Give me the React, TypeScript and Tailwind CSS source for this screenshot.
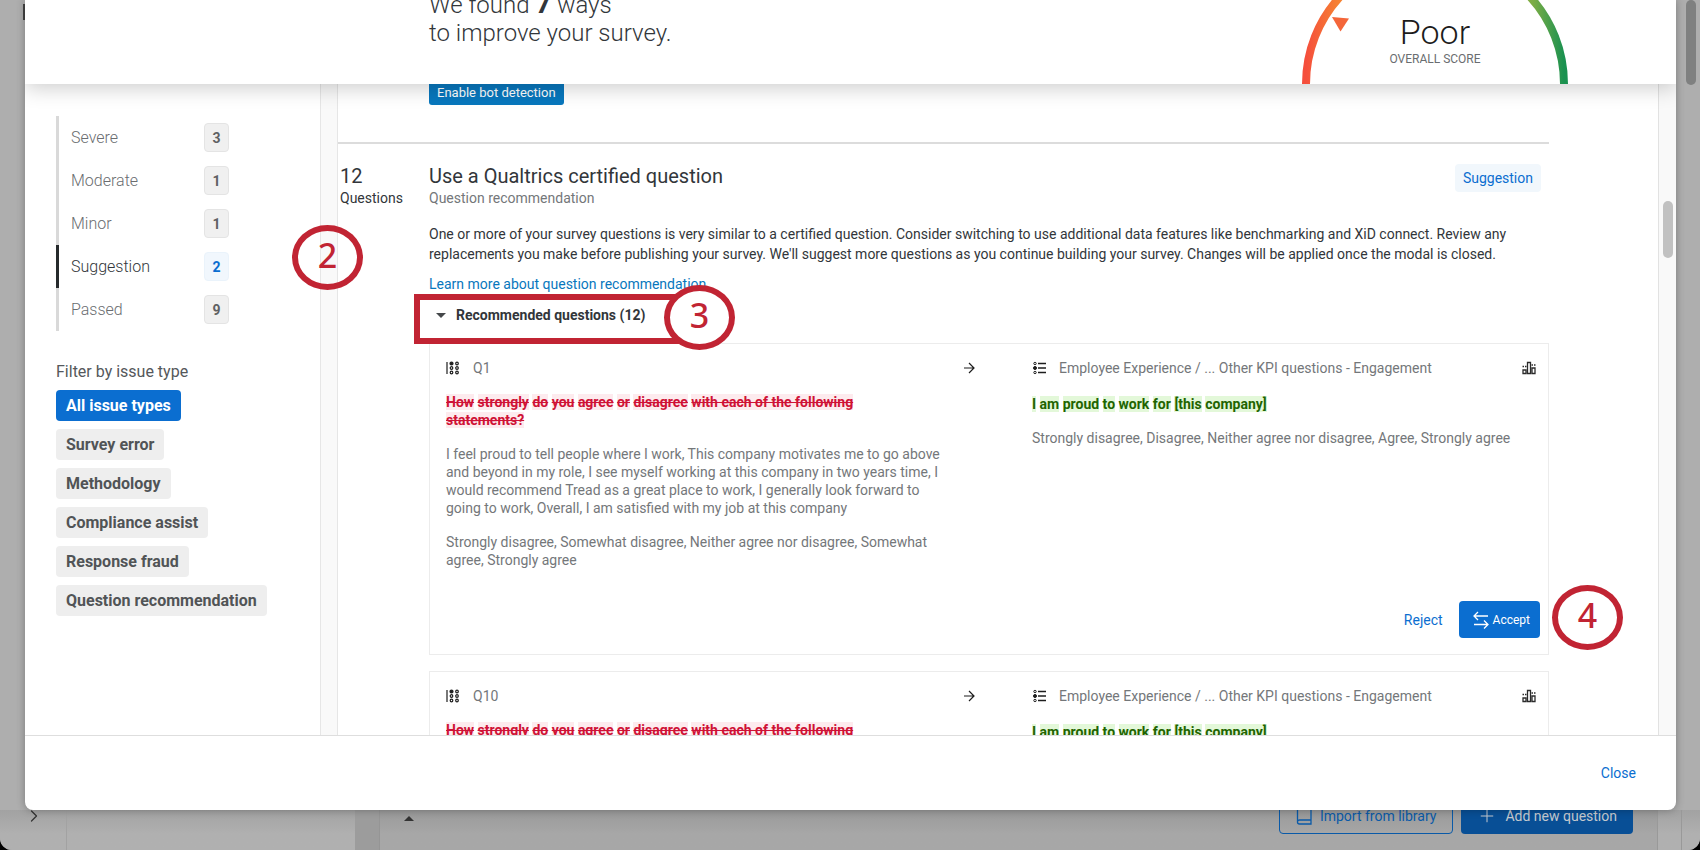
import React from 'react';
import { ChevronRight, Plus } from 'lucide-react';

const SEVERITIES = [
    { label: 'Severe', count: 3 },
    { label: 'Moderate', count: 1 },
    { label: 'Minor', count: 1 },
    { label: 'Suggestion', count: 2 },
    { label: 'Passed', count: 9 },
];

const ISSUE_TYPES = [
    'All issue types',
    'Survey error',
    'Methodology',
    'Compliance assist',
    'Response fraud',
    'Question recommendation',
];

const REMOVED = ['How', 'strongly', 'do', 'you', 'agree', 'or', 'disagree', 'with each of the following', 'statements?'];
const ADDED = ['I', 'am', 'proud', 'to', 'work', 'for', '[this', 'company]'];

export default function App() {
    return (
        <div className="relative h-screen overflow-hidden bg-black font-['Roboto','Liberation_Sans',sans-serif] text-[#32363a]">
            <EditorBackdrop />

            <main className="absolute inset-x-0 top-0 bottom-10 mr-6 ml-[25px] flex flex-col overflow-hidden rounded-b-lg bg-white shadow-[0_0_8px_rgba(0,0,0,0.3)]">
                <ModalHeader />

                <div className="flex min-h-0 flex-1">
                    <Sidebar />
                    <div className="w-[18px] shrink-0 border-x border-[#e6e6e6] bg-[#f9f9f9]" />
                    <Recommendations />
                    <div className="w-[18px] shrink-0 border-l border-[#e2e2e2] bg-[#f9f9f9] px-1 pt-[117px]">
                        <div className="h-[57px] w-[10px] rounded-full bg-[#c1c1c1]" />
                    </div>
                </div>

                <footer className="flex h-[75px] shrink-0 items-center justify-end border-t border-[#dedede] px-10">
                    <button type="button" className="text-sm text-[#0b6ed0]">Close</button>
                </footer>
            </main>

            <Callout number={2} className="top-[225px] left-[292px]" />
            <div className="absolute top-[294px] left-[414px] h-[50px] w-[284px] border-6 border-[#c12433]" />
            <Callout number={3} className="top-[285px] left-[664px] bg-white" />
            <Callout number={4} className="top-[585px] right-[77px]" />
        </div>
    );
}

const EditorBackdrop = () => (
    <div className="flex h-full flex-col justify-end rounded-b-xl bg-[#aeaeae]">
        <div className="absolute top-1 left-[23px] h-4 w-1 bg-[#444]" />
        <div className="absolute top-0 right-1 h-[85px] w-[10px] rounded-full bg-[#7f8080]" />
        <div className="flex h-10 rounded-b-xl bg-linear-to-b from-[#a2a2a2] to-[#b0b0b0] to-60%">
            <div className="flex w-[67px] justify-end border-r border-[#a2a2a2] pr-[22px]">
                <ChevronRight className="-mt-1 size-5 text-[#333]" strokeWidth={1.5} />
            </div>
            <div className="w-[288px]" />
            <div className="w-[25px] border-r border-[#959595] bg-[#9c9c9c]" />
            <div className="flex flex-1 items-start justify-between border-r border-[#999] bg-black/5 pr-6 pl-6">
                <svg width="10" height="5" viewBox="0 0 10 5" className="mt-[6px]">
                    <path d="M0 5 5 0l5 5z" fill="#333" />
                </svg>
                <div className="-mt-3 flex gap-2 text-sm">
                    <button type="button" className="flex h-9 items-center gap-2 rounded border border-[#0a5aa8] px-4 text-[#0a5aa8]">
                        <BookIcon />
                        Import from library
                    </button>
                    <button type="button" className="flex h-9 items-center gap-2 rounded bg-[#084f96] px-4 text-[#c4c9ce]">
                        <Plus className="size-5" strokeWidth={1.2} />
                        Add new question
                    </button>
                </div>
            </div>
            <div className="w-6 border-r border-[#999]" />
            <div className="w-[18px]" />
        </div>
    </div>
);

const ModalHeader = () => (
    <header className="relative z-10 flex h-[84px] shrink-0 items-end bg-white pr-[108px] pl-[404px] shadow-[0_4px_20px_rgba(0,0,0,0.2)]">
        <h1 className="flex-1 pb-[37px] text-2xl leading-7 font-light">
            We found <strong className="text-[28px] font-bold">7</strong> ways
            <br />
            to improve your survey.
        </h1>
        <ScoreGauge />
    </header>
);

const ScoreGauge = () => (
    <div className="grid h-[84px] w-[266px] overflow-hidden">
        <svg viewBox="0 49 266 84" className="col-start-1 row-start-1 h-[84px] w-full">
            <defs>
                <linearGradient id="score" x1="0" x2="1" y1="0" y2="0">
                    <stop offset="0" stopColor="#f54e3c" />
                    <stop offset="0.12" stopColor="#f68033" />
                    <stop offset="0.5" stopColor="#f2c32e" />
                    <stop offset="0.88" stopColor="#7cad45" />
                    <stop offset="1" stopColor="#1a9150" />
                </linearGradient>
            </defs>
            <path d="M4 133a129 129 0 0 1 258 0" fill="none" stroke="url(#score)" strokeWidth="8" />
            <path d="M30 66l17 1.500-8.500 13z" fill="#f4663a" />
        </svg>
        <div className="col-start-1 row-start-1 pt-[13px] text-center">
            <p className="text-[34px] leading-[38px] font-light text-[#1c1c1c]">Poor</p>
            <p className="text-xs text-[#6a6d70]">OVERALL SCORE</p>
        </div>
    </div>
);

const Sidebar = () => (
    <aside className="w-[295px] shrink-0 pt-8 pl-[31px]">
        <ul>
            {SEVERITIES.map(({ label, count }) => {
                const active = label === 'Suggestion';
                return (
                    <li key={label}>
                        <button
                            type="button"
                            className={`flex h-[43px] w-[173px] items-center justify-between border-l-3 pl-3 ${active ? 'border-[#262a2c]' : 'border-[#d9d9d9] text-[#6a6d70]'}`}
                        >
                            <span className="font-light">{label}</span>
                            <span
                                className={`flex h-[29px] w-[25px] items-center justify-center rounded border text-sm font-bold ${active ? 'border-[#eaf3fb] bg-[#f1f7fd] text-[#0b6ed0]' : 'border-[#e4e4e4] bg-[#f0f0f0] text-[#5f6163]'}`}
                            >
                                {count}
                            </span>
                        </button>
                    </li>
                );
            })}
        </ul>

        <h2 className="mt-[29px] leading-6 text-[#55585b]">Filter by issue type</h2>
        <div className="mt-[6px] flex flex-col items-start gap-2">
            {ISSUE_TYPES.map((type, index) => (
                <button
                    key={type}
                    type="button"
                    className={`h-[31px] rounded px-[10px] font-bold ${index === 0 ? 'bg-[#0b6ed0] text-white' : 'bg-[#eeeeee] text-[#515456]'}`}
                >
                    {type}
                </button>
            ))}
        </div>
    </aside>
);

const Recommendations = () => (
    <section className="min-w-0 flex-1 overflow-hidden pr-[109px]">
        <div className="border-b-2 border-[#dcdcdc] pb-[37px] pl-[91px]">
            <button type="button" className="-mt-2 block h-[29px] rounded-[3px] bg-[#0877bd] px-2 pt-1 text-[13px] text-white">
                Enable bot detection
            </button>
        </div>

        <div className="flex pt-5">
            <div className="w-[91px] shrink-0 pl-[2px]">
                <p className="text-xl leading-6">12</p>
                <p className="text-sm">Questions</p>
            </div>
            <div className="min-w-0 flex-1">
                <div className="flex items-start justify-between pr-2">
                    <div>
                        <h2 className="text-xl leading-6">Use a Qualtrics certified question</h2>
                        <p className="text-sm text-[#74777a]">Question recommendation</p>
                    </div>
                    <span className="rounded bg-[#f1f7fc] px-2 py-1 text-sm text-[#0b6ed0]">Suggestion</span>
                </div>

                <p className="mt-4 text-sm">
                    One or more of your survey questions is very similar to a certified question. Consider switching to use additional data features like benchmarking and XiD connect. Review any replacements you make before publishing your survey. We'll suggest more questions as you continue building your survey. Changes will be applied once the modal is closed.
                </p>
                <a href="#learn" className="mt-[10px] inline-block text-sm text-[#0877bd]">Learn more about question recommendation</a>
                <button type="button" className="mt-[9px] mb-[18px] flex items-center gap-[10px] pl-[7px] text-sm font-bold">
                    <svg width="10" height="5" viewBox="0 0 10 5">
                        <path d="M0 0h10L5 5z" fill="#45484a" />
                    </svg>
                    Recommended questions (12)
                </button>

                <div className="flex flex-col gap-4">
                    <QuestionCard id="Q1" />
                    <QuestionCard id="Q10" />
                </div>
            </div>
        </div>
    </section>
);

const QuestionCard = ({ id }: { id: string }) => (
    <article className="border border-[#ececec] pt-4 pr-3 pl-4 text-sm text-[#74777a]">
        <div className="flex">
            <div className="w-[517px] pr-4">
                <div className="flex h-4 items-center gap-3">
                    <MatrixIcon />
                    {id}
                </div>
                <p className="mt-[17px] pr-8 leading-[18px] font-bold text-[#cf1236]">
                    <DiffWords words={REMOVED} className="bg-[#fdebee] line-through" />
                </p>
                <p className="mt-4 leading-[18px]">
                    I feel proud to tell people where I work, This company motivates me to go above and beyond in my role, I see myself working at this company in two years time, I would recommend Tread as a great place to work, I generally look forward to going to work, Overall, I am satisfied with my job at this company
                </p>
                <p className="mt-4 leading-[18px]">
                    Strongly disagree, Somewhat disagree, Neither agree nor disagree, Somewhat agree, Strongly agree
                </p>
            </div>
            <div className="flex-1">
                <ArrowIcon />
            </div>
            <div className="w-[504px]">
                <div className="flex h-4 items-center gap-3">
                    <ListIcon />
                    <span className="flex-1">Employee Experience / ... Other KPI questions - Engagement</span>
                    <BenchmarkIcon />
                </div>
                <p className="mt-[19px] leading-[18px] font-bold text-[#1f6400]">
                    <DiffWords words={ADDED} className="bg-[#e3f8d9]" />
                </p>
                <p className="mt-4 leading-[18px]">
                    Strongly disagree, Disagree, Neither agree nor disagree, Agree, Strongly agree
                </p>
            </div>
        </div>
        <div className="-mr-1 flex items-center justify-end gap-4 pt-8 pb-4">
            <button type="button" className="text-[#0b6ed0]">Reject</button>
            <button type="button" className="flex h-[37px] items-center gap-1 rounded bg-[#0b6ed0] pr-[10px] pl-[14px] text-xs text-white">
                <SwapIcon />
                Accept
            </button>
        </div>
    </article>
);

const DiffWords = ({ words, className }: { words: string[]; className: string }) => (
    <>
        {words.map((word) => (
            <React.Fragment key={word}>
                <span className={className}>{word}</span>{' '}
            </React.Fragment>
        ))}
    </>
);

const Callout = ({ number, className }: { number: number; className: string }) => (
    <div
        className={`absolute flex h-[65px] w-[71px] items-center justify-center rounded-[50%] border-6 border-[#c12433] pb-[6px] font-['Noto_Sans','Open_Sans',sans-serif] text-[34px] leading-none font-medium text-[#c12433] ${className}`}
    >
        {number}
    </div>
);

const MatrixIcon = () => (
    <svg width="15" height="14" viewBox="0 0 15 14" fill="none" stroke="#1d1d1d" strokeWidth="1.200">
        <path d="M1 1v12" />
        <circle cx="5.500" cy="2.500" r="1.500" fill="#1d1d1d" />
        <circle cx="5.500" cy="7" r="1.300" />
        <circle cx="5.500" cy="11.500" r="1.300" />
        <circle cx="11" cy="2.500" r="1.300" />
        <circle cx="11" cy="7" r="1.300" />
        <circle cx="11" cy="11.500" r="1.300" />
    </svg>
);

const ListIcon = () => (
    <svg width="15" height="14" viewBox="0 0 15 14" fill="none" stroke="#1d1d1d">
        <circle cx="3" cy="2.500" r="1.200" />
        <circle cx="3" cy="7" r="1.500" fill="#1d1d1d" />
        <circle cx="3" cy="11.500" r="1.200" />
        <path d="M6 2.500h8M6 7h8M6 11.500h8" strokeWidth="1.300" />
    </svg>
);

const ArrowIcon = () => (
    <svg width="12" height="12" viewBox="0 0 12 12" fill="none" stroke="#1d1d1d" strokeWidth="1.200" className="mt-[2px]">
        <path d="M1 6h9.500M6 1l5 5-5 5" />
    </svg>
);

const BenchmarkIcon = () => (
    <svg width="14" height="14" viewBox="0 0 14 14" fill="none" stroke="#2b2b2b" strokeWidth="1.300">
        <path d="M1 12.500V9h3v3.500zM5.500 12.500V1.500h3v11zM10 12.500V7h3v5.500z" />
        <path d="M.5 5.500h4M9.500 4h4" strokeDasharray="1.500 1" />
    </svg>
);

const SwapIcon = () => (
    <svg width="16" height="18" viewBox="0 0 16 18" fill="none" stroke="white" strokeWidth="1.300">
        <path d="M15 5H1.500M5 1 1 5l4 4M1 13.500h13.500M11 9.500l4 4-4 4" />
    </svg>
);

const BookIcon = () => (
    <svg width="16" height="18" viewBox="0 0 16 18" fill="none" stroke="currentColor" strokeWidth="1.300">
        <path d="M15 13H3.500a2 2 0 0 0 0 4H15V1H3.500a2 2 0 0 0-2 2v12" />
    </svg>
);
